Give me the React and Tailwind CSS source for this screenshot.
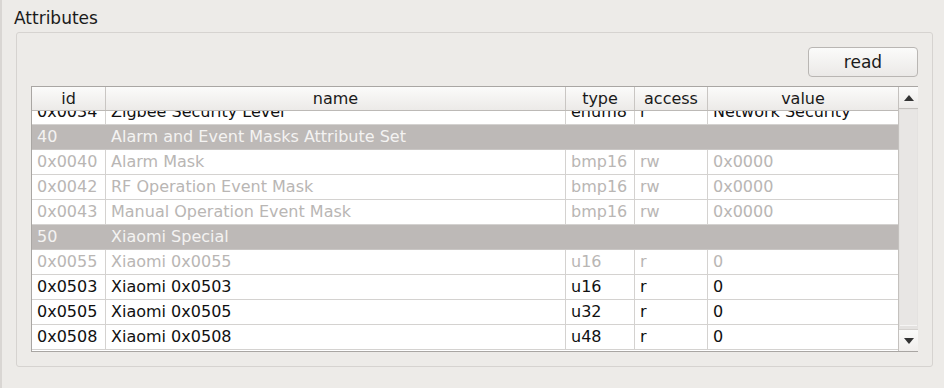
import React from 'react';

const COLS = ['w-[74px]', 'w-[460px]', 'w-[69px]', 'w-[73px]', 'w-[190px]'];

const rows = [
  { kind: 'attr', dim: false, cells: ['0x0034', 'Zigbee Security Level', 'enum8', 'r', 'Network Security'] },
  { kind: 'group', cells: ['40', 'Alarm and Event Masks Attribute Set'] },
  { kind: 'attr', dim: true, cells: ['0x0040', 'Alarm Mask', 'bmp16', 'rw', '0x0000'] },
  { kind: 'attr', dim: true, cells: ['0x0042', 'RF Operation Event Mask', 'bmp16', 'rw', '0x0000'] },
  { kind: 'attr', dim: true, cells: ['0x0043', 'Manual Operation Event Mask', 'bmp16', 'rw', '0x0000'] },
  { kind: 'group', cells: ['50', 'Xiaomi Special'] },
  { kind: 'attr', dim: true, cells: ['0x0055', 'Xiaomi 0x0055', 'u16', 'r', '0'] },
  { kind: 'attr', dim: false, cells: ['0x0503', 'Xiaomi 0x0503', 'u16', 'r', '0'] },
  { kind: 'attr', dim: false, cells: ['0x0505', 'Xiaomi 0x0505', 'u32', 'r', '0'] },
  { kind: 'attr', dim: false, cells: ['0x0508', 'Xiaomi 0x0508', 'u48', 'r', '0'] },
];

/* ---------------- ROW ---------------- */
const Row = ({ row, first }) => {
  const top = first ? '-mt-[11px]' : '';
  if (row.kind === 'group') {
    return (
      <div className={`flex h-[25px] bg-[#bdb9b7] text-[#f4f3f2] border-b border-[#c9c6c4] ${top}`}>
        <div className={`${COLS[0]} shrink-0 pl-[5px] leading-[24px]`}>{row.cells[0]}</div>
        <div className="flex-1 pl-[5px] leading-[24px]">{row.cells[1]}</div>
      </div>
    );
  }
  const color = row.dim ? 'text-[#b9b6b4]' : 'text-[#111]';
  return (
    <div className={`flex h-[25px] bg-white border-b border-[#d4d2d0] ${color} ${top}`}>
      {row.cells.map((c, i) => (
        <div
          key={i}
          className={`${COLS[i]} shrink-0 pl-[5px] leading-[24px] whitespace-nowrap overflow-hidden ${i < 4 ? 'border-r border-[#d4d2d0]' : ''}`}
        >
          {c}
        </div>
      ))}
    </div>
  );
};

const headers = ['id', 'name', 'type', 'access', 'value'];

export default function App() {
  return (
    <div
      className="w-[944px] h-[388px] bg-[#edebe8] border-l-2 border-[#d9d6d3] overflow-hidden text-[16px] text-[#1a1a1a]"
      style={{ fontFamily: '"DejaVu Sans", Verdana, sans-serif' }}
    >
      {/* Title */}
      <div className="pl-[12px] pt-[8px] h-[32px] leading-[20px] text-[17px]">Attributes</div>

      {/* Group box */}
      <div className="ml-[14px] w-[917px] h-[335px] border border-[#d6d3d0] rounded-[3px] px-[14px] pt-[14px]">
        <div className="flex justify-end">
          <button className="w-[110px] h-[30px] rounded-[4px] border border-[#b9b6b3] bg-gradient-to-b from-[#fbfbfa] to-[#ebe9e7] leading-[26px] text-[17px] text-[#1a1a1a]">
            read
          </button>
        </div>

        {/* Table */}
        <div className="mt-[9px] w-[887px] h-[266px] border border-[#a9a6a3] flex bg-white">
          <div className="w-[866px] flex flex-col">
            <div className="flex h-[24px] shrink-0 bg-gradient-to-b from-[#fbfbfa] to-[#eceae8] border-b border-[#bcb9b6] relative z-10">
              {headers.map((h, i) => (
                <div
                  key={h}
                  className={`${COLS[i]} shrink-0 text-center leading-[23px] ${i < 4 ? 'border-r border-[#c9c6c3]' : ''}`}
                >
                  {h}
                </div>
              ))}
            </div>
            <div className="flex-1 overflow-hidden">
              {rows.map((r, i) => (
                <Row key={i} row={r} first={i === 0} />
              ))}
            </div>
          </div>

          {/* Scrollbar */}
          <div className="w-[20px] shrink-0 flex flex-col border-l border-[#c4c1be] bg-[#e4e2e0]">
            <div className="h-[22px] bg-gradient-to-b from-[#fbfbfa] to-[#eceae8] border-b border-[#c4c1be] flex items-center justify-center">
              <svg width="10" height="6" viewBox="0 0 10 6"><path d="M5 0 L10 6 L0 6 Z" fill="#333" /></svg>
            </div>
            <div className="flex-1 px-[1px] pt-[1px] pb-[3px]">
              <div className="h-full bg-[#e8e6e4] border-b border-[#f6f5f4]" />
            </div>
            <div className="h-[22px] bg-gradient-to-b from-[#fbfbfa] to-[#f0eeec] border-t border-[#d4d1ce] flex items-center justify-center">
              <svg width="10" height="6" viewBox="0 0 10 6"><path d="M0 0 L10 0 L5 6 Z" fill="#333" /></svg>
            </div>
          </div>
        </div>
      </div>
    </div>
  );
}
